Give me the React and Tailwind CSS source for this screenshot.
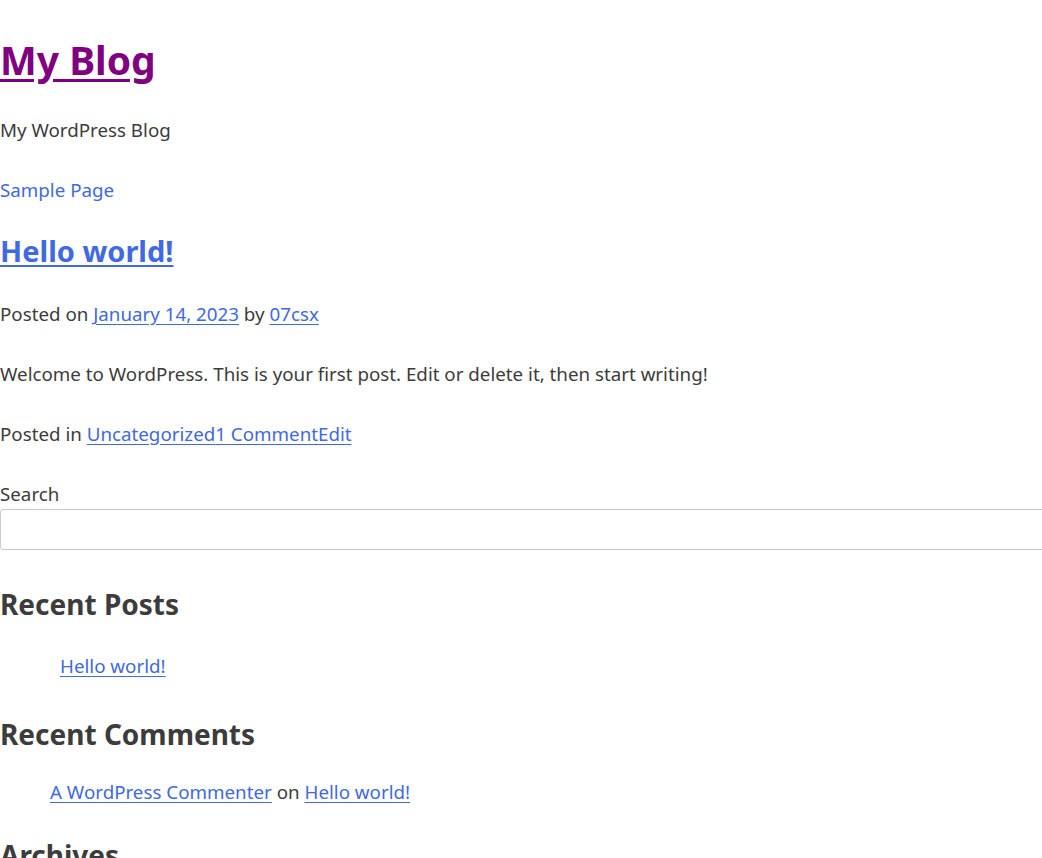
const linkCls = "text-[#4169e1] underline underline-offset-[3px]"

const App = () => {
  return (
    <div className="min-h-[858px] bg-white text-[#3c3c3c] text-[18.75px] font-['Noto_Sans',sans-serif] overflow-hidden">
      <header>
        <h1 className="pt-[30px] leading-[60px] text-[39px] font-bold">
          <a href="#" className="text-[#800080] underline underline-offset-[4px]">My Blog</a>
        </h1>
        <p className="mt-[25px] leading-[30px]">My WordPress Blog</p>
        <nav className="mt-[30px] leading-[30px]">
          <a href="#" className="text-[#4169e1]">Sample Page</a>
        </nav>
      </header>

      <article>
        <h2 className="mt-[26px] leading-[40px] text-[29px] font-bold">
          <a href="#" className={linkCls}>Hello world!</a>
        </h2>
        <p className="mt-[28px] leading-[30px]">
          Posted on <a href="#" className={linkCls}>January 14, 2023</a> by{" "}
          <a href="#" className={linkCls}>07csx</a>
        </p>
        <p className="mt-[30px] leading-[30px]">
          Welcome to WordPress. This is your first post. Edit or delete it, then start writing!
        </p>
        <p className="mt-[30px] leading-[30px]">
          Posted in <a href="#" className={linkCls}>Uncategorized</a>
          <a href="#" className={linkCls}>1 Comment</a>
          <a href="#" className={linkCls}>Edit</a>
        </p>
      </article>

      <aside>
        <div className="mt-[30px]">
          <label className="block leading-[30px]">Search</label>
          <input type="text" className="block w-[1060px] h-[41px] border border-[#cccccc] rounded-[3px]" />
        </div>

        <h2 className="mt-[34px] leading-[40px] text-[28px] font-bold">Recent Posts</h2>
        <ul className="mt-[27px] leading-[30px] pl-[60px]">
          <li><a href="#" className={linkCls}>Hello world!</a></li>
        </ul>

        <h2 className="mt-[33px] leading-[40px] text-[28px] font-bold">Recent Comments</h2>
        <ul className="mt-[23px] leading-[30px] pl-[50px]">
          <li>
            <a href="#" className={linkCls}>A WordPress Commenter</a> on{" "}
            <a href="#" className={linkCls}>Hello world!</a>
          </li>
        </ul>

        <h2 className="mt-[28px] leading-[40px] text-[28px] font-bold">Archives</h2>
      </aside>
    </div>
  )
}

export default App
